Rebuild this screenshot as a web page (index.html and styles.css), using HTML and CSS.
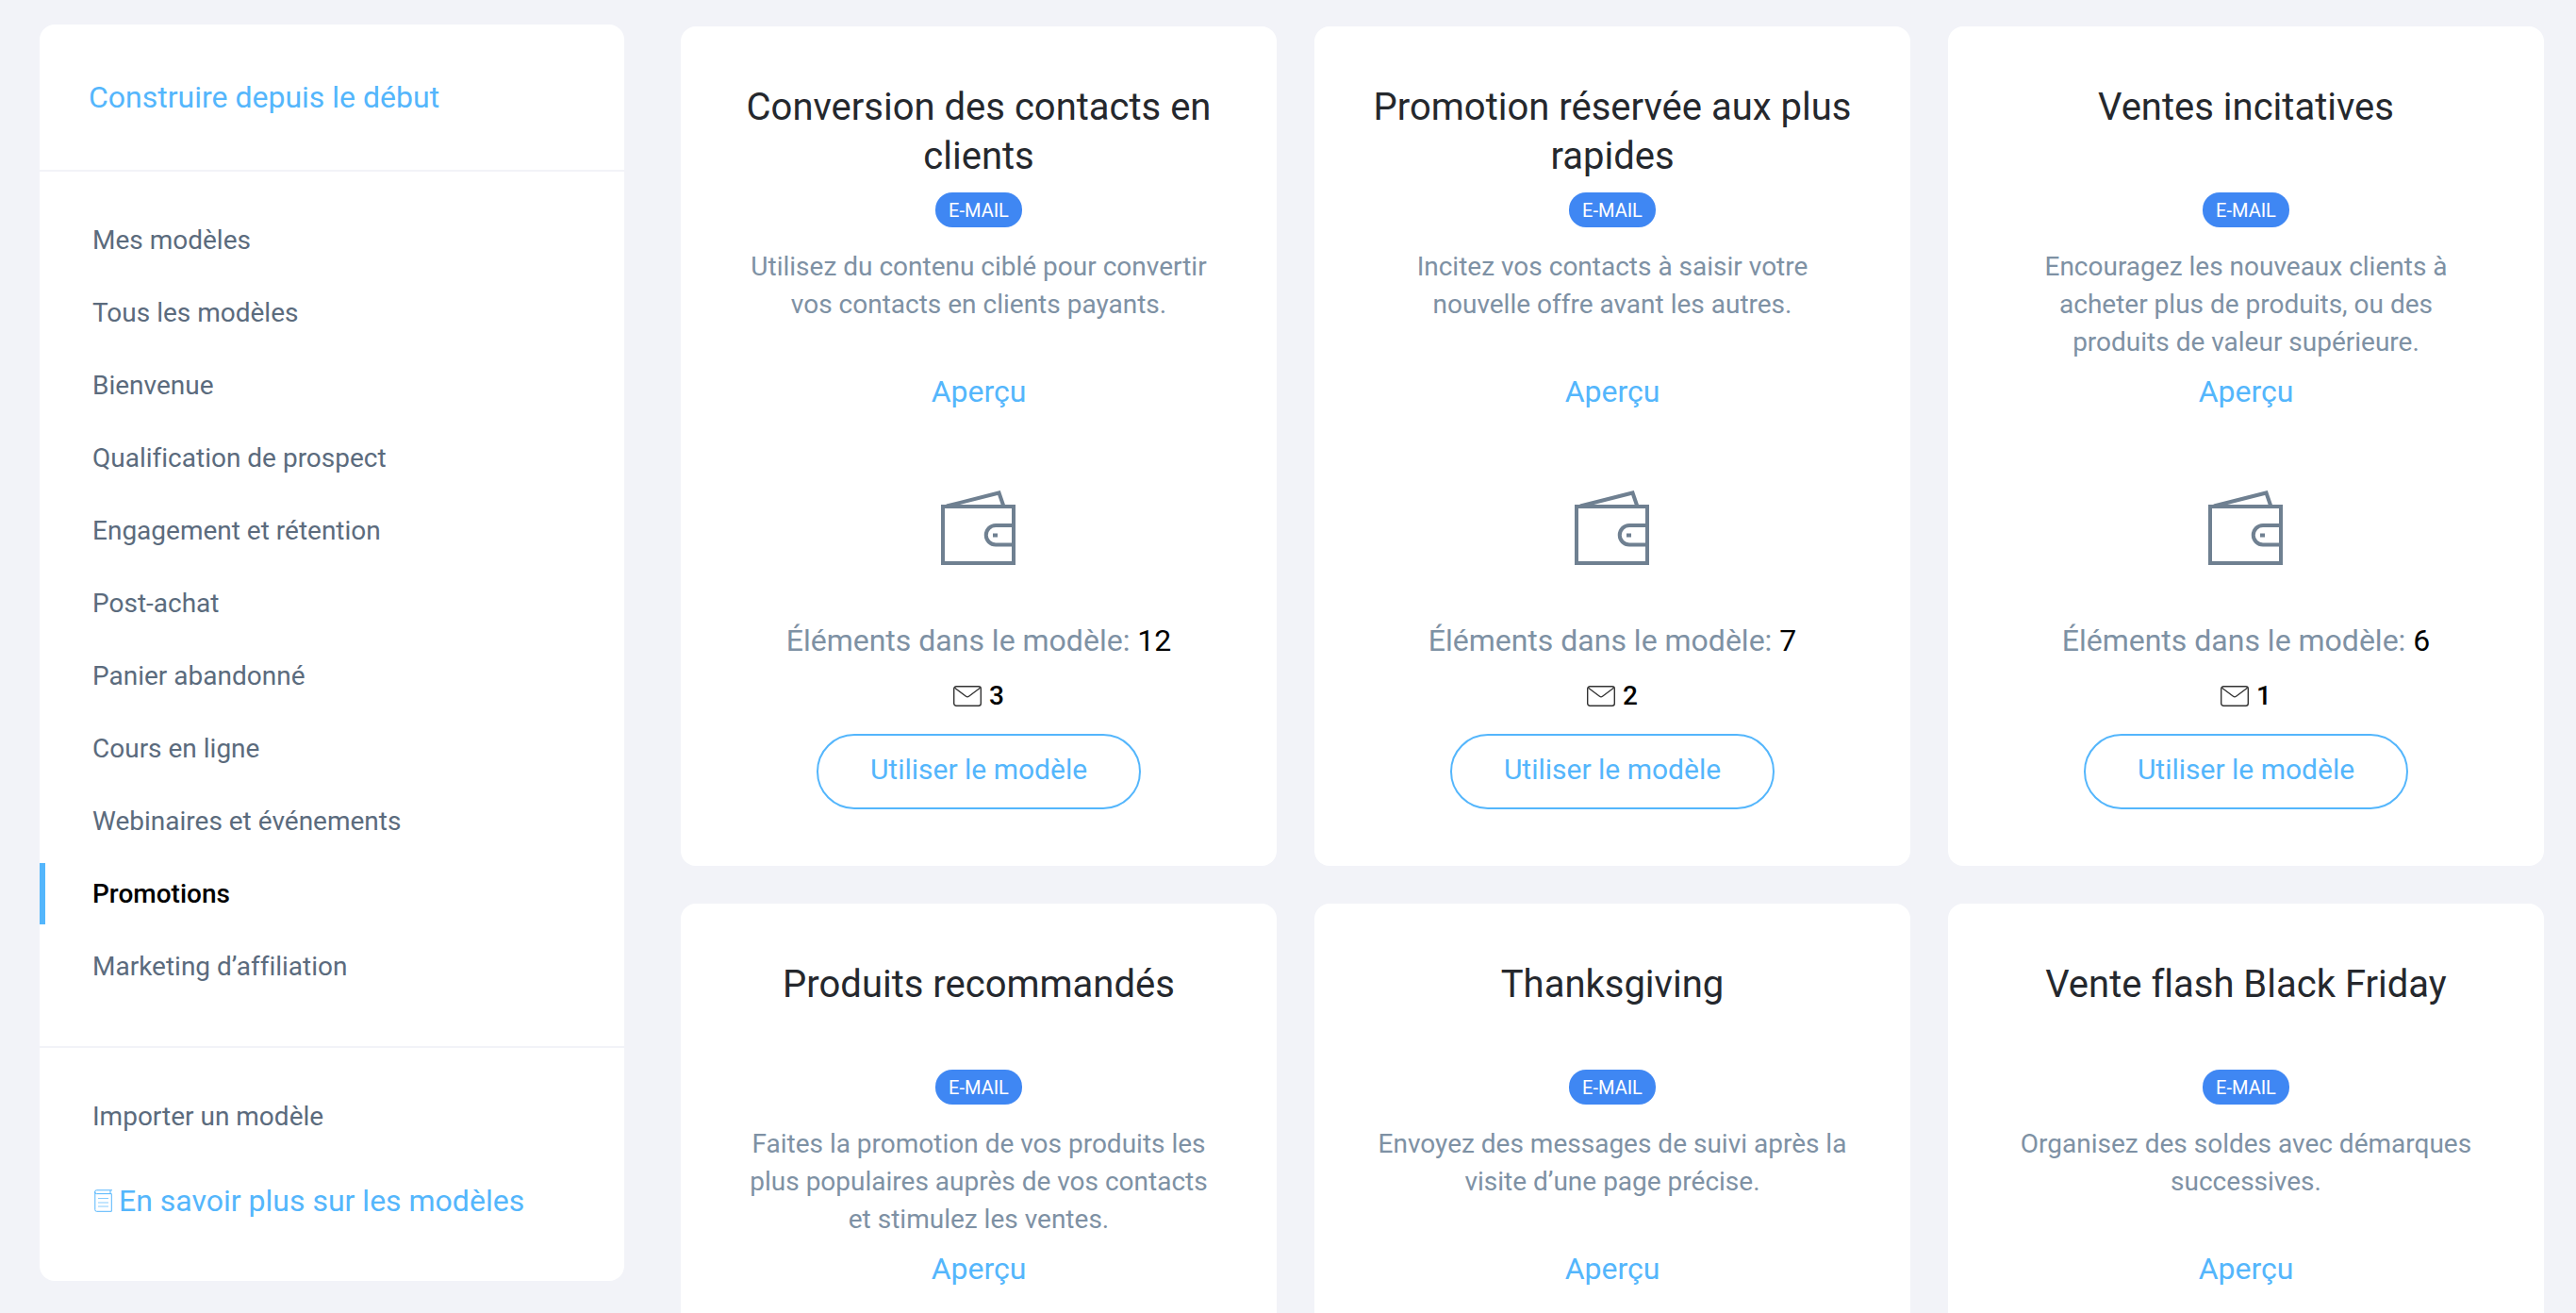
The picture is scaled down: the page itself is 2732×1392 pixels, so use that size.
FILE: index.html
```html
<!DOCTYPE html>
<html lang="fr">
<head>
  <meta charset="UTF-8" />
  <meta name="viewport" content="width=device-width, initial-scale=1.0"/>
  <title>Modèles</title>
  <link rel="stylesheet" href="styles.css">
</head>
<body>
  <!-- shared icons -->
  <svg class="sprite" aria-hidden="true">
    <symbol id="wallet" viewBox="0 0 80 80">
      <g fill="none" stroke="currentColor" stroke-width="4">
        <rect x="2" y="17" width="75" height="60"/>
        <path d="M6 16.5L61.500 2.500L66.500 17"/>
        <path d="M77 37H58a10 10 0 0 0 0 20.500H77"/>
      </g>
      <rect x="55" y="45.500" width="5" height="4" fill="currentColor"/>
    </symbol>
    <symbol id="mail" viewBox="0 0 30 22">
      <g fill="none" stroke="currentColor" stroke-width="1.400">
        <rect x="0.700" y="0.700" width="28.600" height="20.600" rx="2.500"/>
        <path d="M1.500 2.200L13.500 11.300Q15 12.400 16.500 11.300L28.500 2.200"/>
      </g>
    </symbol>
    <symbol id="doc" viewBox="0 0 20 24">
      <g fill="none" stroke="currentColor">
        <path d="M19 0.800H2.500a1.700 1.700 0 0 0 0 3.800H18.300V23.300H2.500a1.700 1.700 0 0 1-1.700-1.700V2.500M17 1V4.500"/>
        <path d="M4 9.500H15M4 14H15M4 18H15" stroke-opacity="0.700"/>
      </g>
    </symbol>
  </svg>

  <main class="layout">
    <aside class="sidebar">
      <div class="sidebar-top">
        <a class="link" href="#">Construire depuis le début</a>
      </div>

      <nav class="menu">
        <a href="#">Mes modèles</a>
        <a href="#">Tous les modèles</a>
        <a href="#">Bienvenue</a>
        <a href="#">Qualification de prospect</a>
        <a href="#">Engagement et rétention</a>
        <a href="#">Post-achat</a>
        <a href="#">Panier abandonné</a>
        <a href="#">Cours en ligne</a>
        <a href="#">Webinaires et événements</a>
        <a class="active" href="#">Promotions</a>
        <a href="#">Marketing d’affiliation</a>
      </nav>

      <div class="menu sidebar-bottom">
        <a href="#">Importer un modèle</a>
        <a class="link learn-more" href="#"><svg class="icon-doc"><use href="#doc"/></svg>En savoir plus sur les modèles</a>
      </div>
    </aside>

    <section class="templates">
      <article class="card">
        <h2>Conversion des contacts en clients</h2>
        <span class="badge">E-MAIL</span>
        <p class="desc">Utilisez du contenu ciblé pour convertir vos contacts en clients payants.</p>
        <a class="link" href="#">Aperçu</a>
        <svg class="icon-wallet"><use href="#wallet"/></svg>
        <p class="elements">Éléments dans le modèle: <b>12</b></p>
        <p class="count"><svg class="icon-mail"><use href="#mail"/></svg>3</p>
        <button class="use-btn" type="button">Utiliser le modèle</button>
      </article>

      <article class="card">
        <h2>Promotion réservée aux plus rapides</h2>
        <span class="badge">E-MAIL</span>
        <p class="desc">Incitez vos contacts à saisir votre nouvelle offre avant les autres.</p>
        <a class="link" href="#">Aperçu</a>
        <svg class="icon-wallet"><use href="#wallet"/></svg>
        <p class="elements">Éléments dans le modèle: <b>7</b></p>
        <p class="count"><svg class="icon-mail"><use href="#mail"/></svg>2</p>
        <button class="use-btn" type="button">Utiliser le modèle</button>
      </article>

      <article class="card">
        <h2>Ventes incitatives</h2>
        <span class="badge">E-MAIL</span>
        <p class="desc">Encouragez les nouveaux clients à acheter plus de produits, ou des produits de valeur supérieure.</p>
        <a class="link" href="#">Aperçu</a>
        <svg class="icon-wallet"><use href="#wallet"/></svg>
        <p class="elements">Éléments dans le modèle: <b>6</b></p>
        <p class="count"><svg class="icon-mail"><use href="#mail"/></svg>1</p>
        <button class="use-btn" type="button">Utiliser le modèle</button>
      </article>

      <article class="card">
        <h2>Produits recommandés</h2>
        <span class="badge">E-MAIL</span>
        <p class="desc">Faites la promotion de vos produits les plus populaires auprès de vos contacts et stimulez les ventes.</p>
        <a class="link" href="#">Aperçu</a>
      </article>

      <article class="card">
        <h2>Thanksgiving</h2>
        <span class="badge">E-MAIL</span>
        <p class="desc">Envoyez des messages de suivi après la visite d’une page précise.</p>
        <a class="link" href="#">Aperçu</a>
      </article>

      <article class="card">
        <h2>Vente flash Black Friday</h2>
        <span class="badge">E-MAIL</span>
        <p class="desc">Organisez des soldes avec démarques successives.</p>
        <a class="link" href="#">Aperçu</a>
      </article>
    </section>
  </main>
</body>
</html>
```

FILE: styles.css
```css
:root {
  --bg-color: #f2f3f8;
  --card-color: #ffffff;
  --link-color: #54b6fc;
  --menu-color: #5b6b7d;
  --muted-color: #7e91a4;
  --title-color: #25282d;
  --badge-color: #3f87f3;
}

* {
  box-sizing: border-box;
}

body {
  margin: 0;
  background: var(--bg-color);
  font-family: Roboto, "Liberation Sans", sans-serif;
  font-size: 28px;
  font-variant-ligatures: none;
  line-height: 40px;
}

h2,
p {
  margin: 0;
}

a {
  text-decoration: none;
}

.sprite {
  display: none;
}

.layout {
  display: flex;
  align-items: flex-start;
  gap: 60px;
  padding: 26px 34px 40px 42px;
}

/* sidebar */
.sidebar {
  flex: 0 0 620px;
  background: var(--card-color);
  border-radius: 16px;
}

.sidebar-top {
  padding: 57px 52px;
  border-bottom: 2px solid var(--bg-color);
}

.link {
  display: block;
  color: var(--link-color);
  font-size: 32px;
}

.menu {
  display: flex;
  flex-direction: column;
  gap: 12px;
  padding: 40px 0 52px;
}

.menu a:not(.link) {
  padding: 12px 50px;
  border-left: 6px solid transparent;
  color: var(--menu-color);
  line-height: 41px;
}

.menu a.active {
  border-left-color: var(--link-color);
  color: #000;
  font-weight: 500;
}

.sidebar-bottom {
  gap: 37px;
  padding-bottom: 65px;
  border-top: 2px solid var(--bg-color);
}

.learn-more {
  display: flex;
  align-items: center;
  gap: 6px;
  padding: 0 58px;
}

.icon-doc {
  width: 20px;
  height: 24px;
}

/* template cards */
.templates {
  flex: 1;
  display: grid;
  grid-template-columns: repeat(3, 1fr);
  grid-auto-rows: 1fr;
  gap: 40px;
  padding-top: 2px;
}

.card {
  display: flex;
  flex-direction: column;
  align-items: center;
  padding: 60px 56px;
  background: var(--card-color);
  border-radius: 16px;
  text-align: center;
}

.card h2 {
  min-height: 104px;
  color: var(--title-color);
  font-size: 40px;
  font-weight: 400;
  line-height: 52px;
}

.badge {
  margin-top: 12px;
  padding: 1px 14px 0;
  border-radius: 18px;
  background: var(--badge-color);
  color: #fff;
  font-size: 20px;
  line-height: 36px;
}

.desc {
  min-height: 120px;
  margin: 22px 0 12px;
  padding: 0 8px;
  color: var(--muted-color);
}

.icon-wallet {
  width: 80px;
  height: 80px;
  margin: 85px 0 59px;
  color: #6f8091;
}

.elements {
  color: var(--muted-color);
  font-size: 32px;
}

.elements b {
  color: #000;
  font-weight: 400;
}

.count {
  display: flex;
  align-items: center;
  gap: 8px;
  margin: 19px 0 20px;
  color: #000;
  font-weight: 500;
}

.icon-mail {
  width: 30px;
  height: 22px;
  color: #333;
}

.use-btn {
  padding: 16px 55px 20px;
  border: 2px solid var(--link-color);
  border-radius: 40px;
  background: none;
  color: var(--link-color);
  font-family: inherit;
  font-size: 30px;
  line-height: 40px;
  cursor: pointer;
}

@media (max-width: 1600px) {
  .layout {
    flex-direction: column;
    align-items: stretch;
  }

  .sidebar {
    flex-basis: auto;
  }

  .templates {
    grid-template-columns: repeat(auto-fill, minmax(480px, 1fr));
  }
}
```
